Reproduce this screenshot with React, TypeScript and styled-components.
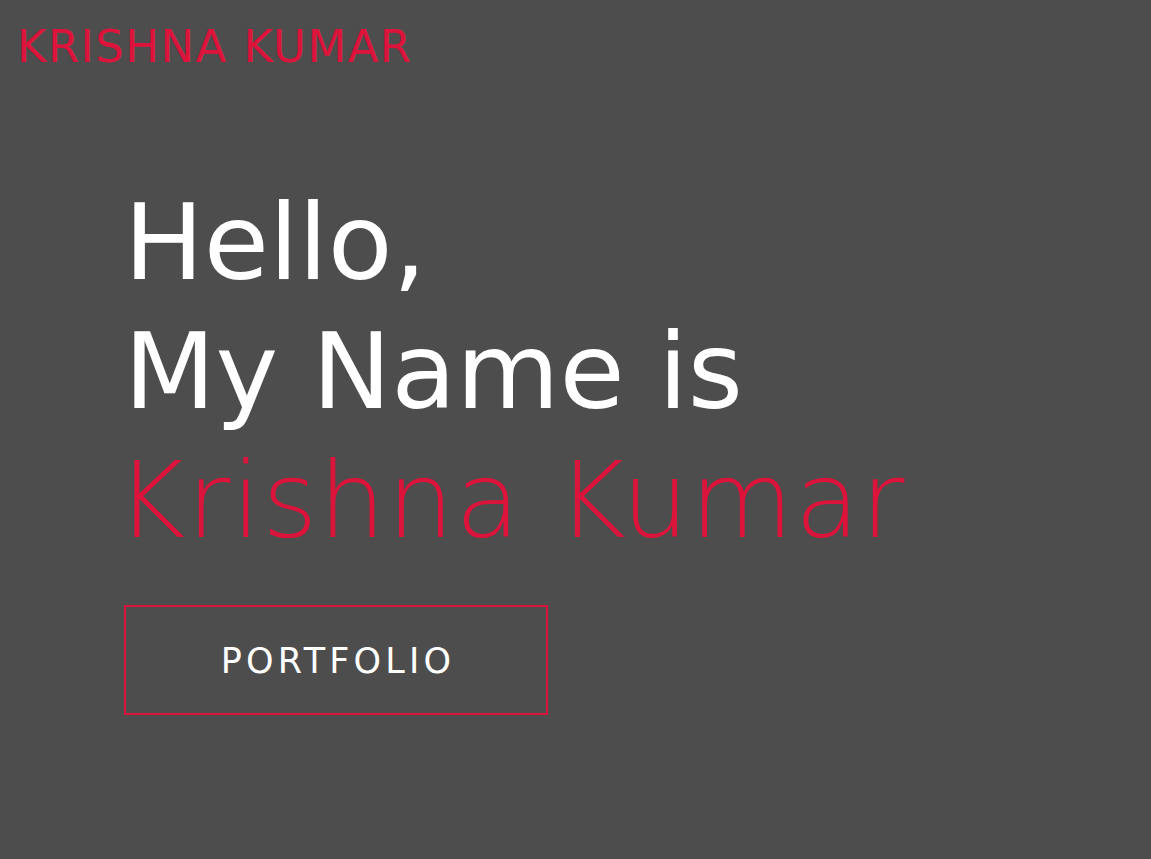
import React from "react";
import styled, { createGlobalStyle } from "styled-components";

const GlobalStyle = createGlobalStyle`
  html, body {
    margin: 0;
    padding: 0;
    background: #4d4d4d;
  }
  body {
    font-family: "DejaVu Sans", "Liberation Sans", sans-serif;
    min-height: 859px;
  }
`;

const Page = styled.div`
  min-height: 859px;
  background: #4d4d4d;
  display: flex;
  flex-direction: column;
`;

const Header = styled.header`
  padding: 21px 17px 0;
  display: flex;
  align-items: center;
`;

const Logo = styled.div`
  color: #dc143c;
  font-size: 45px;
  line-height: 1.164;
  letter-spacing: 1.4px;
  font-weight: 400;
`;

const Hero = styled.section`
  padding: 105px 0 0 124px;
  display: flex;
  flex-direction: column;
  align-items: flex-start;
`;

const Title = styled.h1`
  margin: 0;
  font-weight: 400;
  font-size: 106px;
  line-height: 129px;
  color: #ffffff;
`;

const Line = styled.span<{ $accent?: boolean }>`
  display: block;
  color: ${(p) => (p.$accent ? "#dc143c" : "#ffffff")};
  font-weight: ${(p) => (p.$accent ? 300 : 400)};
  margin-left: ${(p) => (p.$accent ? "-8px" : "0")};
  letter-spacing: ${(p) => (p.$accent ? "1.2px" : "0")};
`;

const Button = styled.button`
  margin-top: 40px;
  width: 424px;
  height: 110px;
  background: transparent;
  border: 2px solid #dc143c;
  color: #ffffff;
  font-family: "DejaVu Sans", "Liberation Sans", sans-serif;
  font-size: 35px;
  font-weight: 400;
  letter-spacing: 4.2px;
  padding: 2px 0 0 4px;
  cursor: pointer;
`;

export default function App() {
  return (
    <>
      <GlobalStyle />
      <Page>
        <Header>
          <Logo>KRISHNA KUMAR</Logo>
        </Header>
        <Hero>
          <Title>
            <Line>Hello,</Line>
            <Line>My Name is</Line>
            <Line $accent>Krishna Kumar</Line>
          </Title>
          <Button>PORTFOLIO</Button>
        </Hero>
      </Page>
    </>
  );
}
